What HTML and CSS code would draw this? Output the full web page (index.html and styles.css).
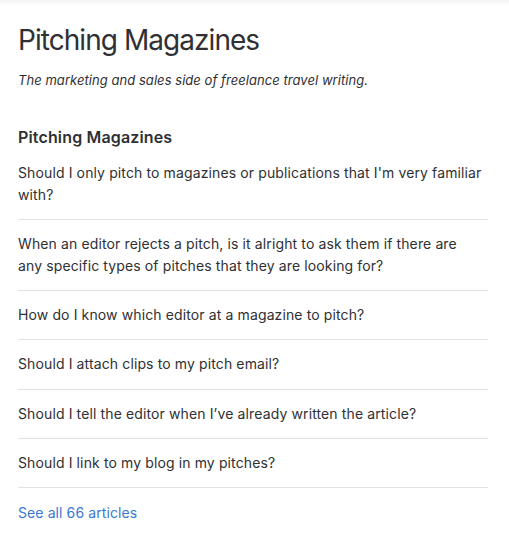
FILE: index.html
```html
<!DOCTYPE html>
<html lang="en">
<head>
<meta charset="utf-8">
<title>Pitching Magazines</title>
<link rel="stylesheet" href="styles.css">
</head>
<body>
<div class="topshade"></div>
<main class="page">
  <header class="page-header">
    <h1 class="page-title">Pitching Magazines</h1>
    <p class="page-desc">The marketing and sales side of freelance travel writing.</p>
  </header>
  <section class="section">
    <h2 class="section-title">Pitching Magazines</h2>
    <ul class="article-list">
      <li class="article-item"><a class="article-link" href="#">Should I only pitch to magazines or publications that I'm very familiar with?</a></li>
      <li class="article-item"><a class="article-link" href="#">When an editor rejects a pitch, is it alright to ask them if there are any specific types of pitches that they are looking for?</a></li>
      <li class="article-item"><a class="article-link" href="#">How do I know which editor at a magazine to pitch?</a></li>
      <li class="article-item"><a class="article-link" href="#">Should I attach clips to my pitch email?</a></li>
      <li class="article-item"><a class="article-link" href="#">Should I tell the editor when I’ve already written the article?</a></li>
      <li class="article-item"><a class="article-link" href="#">Should I link to my blog in my pitches?</a></li>
    </ul>
    <a class="see-all" href="#">See all 66 articles</a>
  </section>
</main>
</body>
</html>
```
FILE: styles.css
```css
* { box-sizing: border-box; }
html, body { margin: 0; padding: 0; background: #fff; }
body {
  font-family: Inter, "Noto Sans", "Liberation Sans", sans-serif;
  color: #2f3033;
  -webkit-font-smoothing: antialiased;
}
.topshade {
  height: 6px;
  background: linear-gradient(#f3f3f5, #fff);
}
.page {
  padding: 0 21px 0 18px;
}
.page-title {
  margin: 0;
  padding-top: 16px;
  font-size: 28px;
  line-height: 36px;
  font-weight: 400;
  letter-spacing: -0.95px;
}
.page-desc {
  margin: 12px 0 0;
  font-size: 13px;
  line-height: 20px;
  font-style: italic;
  letter-spacing: 0.05px;
}
.section { margin-top: 36px; }
.section-title {
  margin: 0;
  font-size: 16px;
  line-height: 22px;
  font-weight: 600;
  letter-spacing: 0.15px;
}
.article-list {
  list-style: none;
  margin: 14px 0 0;
  padding: 0;
}
.article-item {
  padding: 13px 0 13.15px;
  border-bottom: 1px solid #e2e2e2;
}
.article-item:first-child { padding-top: 0; }
.article-link {
  display: block;
  padding-right: 5px;
  color: #2f3033;
  text-decoration: none;
  font-size: 14px;
  line-height: 22px;
  letter-spacing: 0.12px;
}
.see-all {
  display: inline-block;
  margin-top: 14px;
  color: #3a78d4;
  text-decoration: none;
  font-size: 14px;
  line-height: 22px;
  letter-spacing: 0.1px;
}
```
